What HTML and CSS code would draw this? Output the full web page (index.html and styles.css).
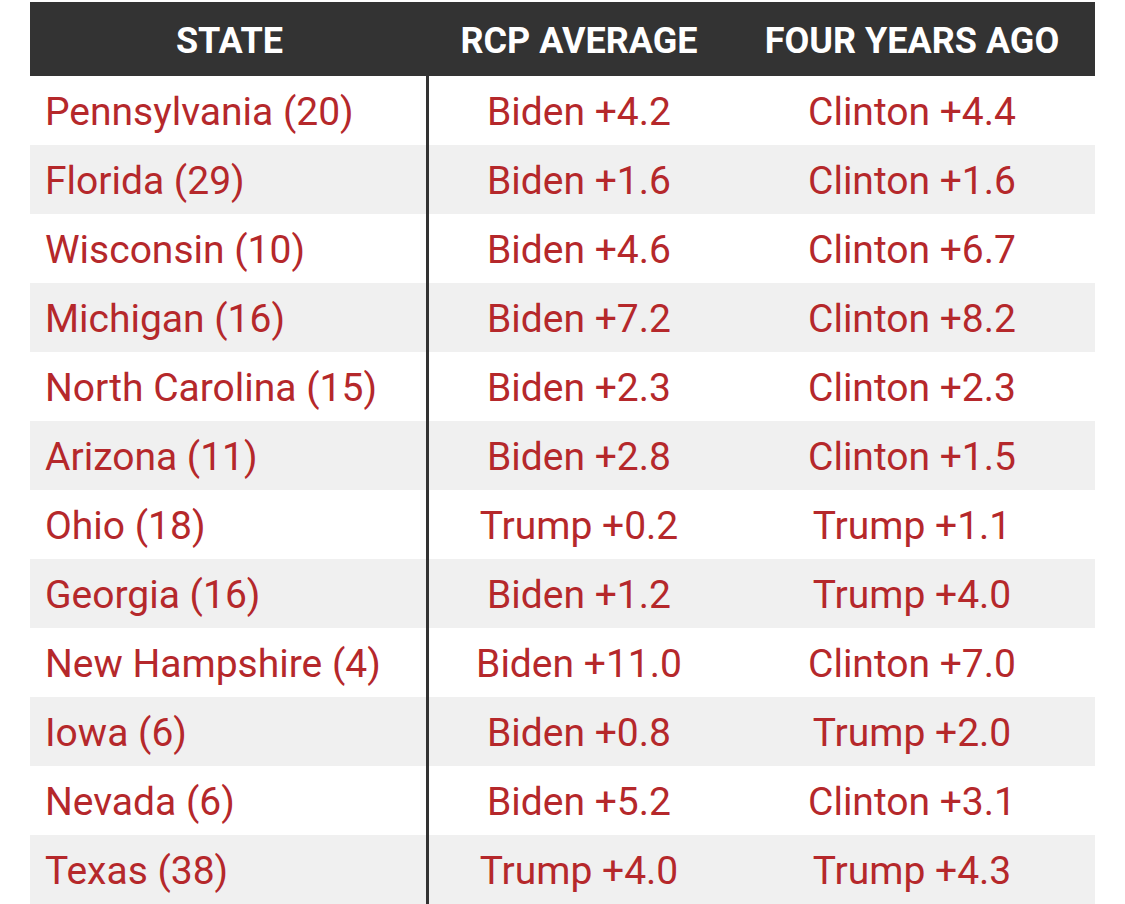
FILE: index.html
```html
<!DOCTYPE html>
<html>
<head>
<meta charset="utf-8">
<link rel="stylesheet" href="styles.css">
</head>
<body>
<div class="table">
  <div class="row head">
    <div class="cell c1">STATE</div>
    <div class="cell c2">RCP AVERAGE</div>
    <div class="cell c3">FOUR YEARS AGO</div>
  </div>
  <div class="row"><div class="cell c1">Pennsylvania (20)</div><div class="cell c2">Biden +4.2</div><div class="cell c3">Clinton +4.4</div></div>
  <div class="row alt"><div class="cell c1">Florida (29)</div><div class="cell c2">Biden +1.6</div><div class="cell c3">Clinton +1.6</div></div>
  <div class="row"><div class="cell c1">Wisconsin (10)</div><div class="cell c2">Biden +4.6</div><div class="cell c3">Clinton +6.7</div></div>
  <div class="row alt"><div class="cell c1">Michigan (16)</div><div class="cell c2">Biden +7.2</div><div class="cell c3">Clinton +8.2</div></div>
  <div class="row"><div class="cell c1">North Carolina (15)</div><div class="cell c2">Biden +2.3</div><div class="cell c3">Clinton +2.3</div></div>
  <div class="row alt"><div class="cell c1">Arizona (11)</div><div class="cell c2">Biden +2.8</div><div class="cell c3">Clinton +1.5</div></div>
  <div class="row"><div class="cell c1">Ohio (18)</div><div class="cell c2">Trump +0.2</div><div class="cell c3">Trump +1.1</div></div>
  <div class="row alt"><div class="cell c1">Georgia (16)</div><div class="cell c2">Biden +1.2</div><div class="cell c3">Trump +4.0</div></div>
  <div class="row"><div class="cell c1">New Hampshire (4)</div><div class="cell c2">Biden +11.0</div><div class="cell c3">Clinton +7.0</div></div>
  <div class="row alt"><div class="cell c1">Iowa (6)</div><div class="cell c2">Biden +0.8</div><div class="cell c3">Trump +2.0</div></div>
  <div class="row"><div class="cell c1">Nevada (6)</div><div class="cell c2">Biden +5.2</div><div class="cell c3">Clinton +3.1</div></div>
  <div class="row alt"><div class="cell c1">Texas (38)</div><div class="cell c2">Trump +4.0</div><div class="cell c3">Trump +4.3</div></div>
</div>
</body>
</html>
```
FILE: styles.css
```css
html, body {
  margin: 0;
  padding: 0;
  background: #ffffff;
}
body {
  padding: 2px 30px 0 30px;
  font-family: Roboto, "Liberation Sans", sans-serif;
}
.table {
  width: 1065px;
  display: flex;
  flex-direction: column;
}
.row {
  display: grid;
  grid-template-columns: 399px 300px 1fr;
  height: 69px;
  background: #ffffff;
}
.row.alt {
  background: #f0f0f0;
}
.row.head {
  height: 74px;
  background: #333333;
}
.cell {
  display: flex;
  align-items: center;
  padding-top: 3px;
  color: #b5282b;
  font-size: 39px;
  white-space: nowrap;
}
.c1 {
  padding-left: 15px;
  border-right: 3px solid #333333;
}
.c2, .c3 {
  justify-content: center;
}
.head .cell {
  color: #ffffff;
  font-weight: 700;
  font-size: 36px;
}
.head .c1 {
  justify-content: center;
  padding-left: 0;
  border-right: none;
}
```
